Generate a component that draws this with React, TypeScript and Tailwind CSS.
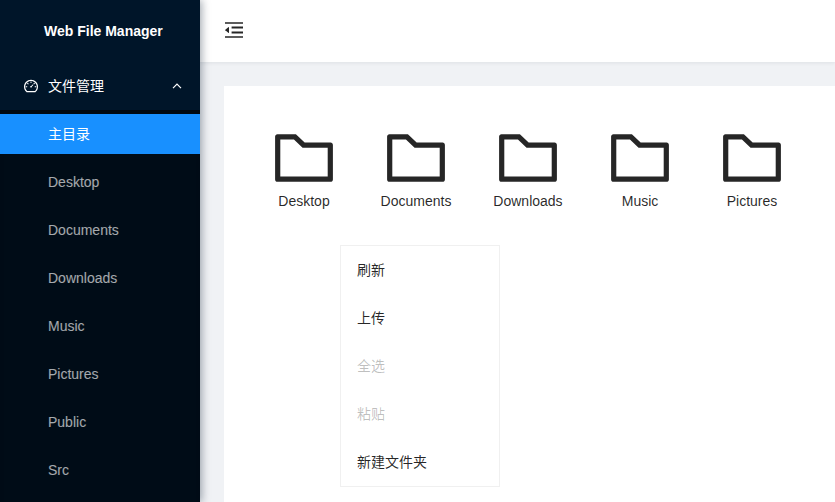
import { AiOutlineDashboard, AiOutlineFolder } from "react-icons/ai";

const places = ["Desktop", "Documents", "Downloads", "Music", "Pictures", "Public", "Src"];
const folders = ["Desktop", "Documents", "Downloads", "Music", "Pictures"];
const actions = [
  { label: "刷新", disabled: false },
  { label: "上传", disabled: false },
  { label: "全选", disabled: true },
  { label: "粘贴", disabled: true },
  { label: "新建文件夹", disabled: false },
];

function FoldIcon() {
  return (
    <svg className="h-4 w-[18px]" viewBox="0 0 18 16" fill="currentColor" aria-hidden="true">
      <path d="M0 .2h18v1.6H0zM0 14.2h18v1.6H0zM6.6 4.6H18v1.8H6.6zM6.6 9.6H18v1.8H6.6z" />
      <path d="M.3 7.7 3.6 5.1Q4 4.8 4 5.3v5.4q0 .5-.4.2L.3 8.3Q0 8 .3 7.7z" />
    </svg>
  );
}

function Sidebar() {
  return (
    <aside className="relative z-10 flex w-[200px] shrink-0 flex-col bg-[#001529] text-white shadow-[2px_0_8px_rgba(0,21,41,0.35)]">
      <h1 className="flex h-[62px] shrink-0 items-center pl-11 font-bold">Web File Manager</h1>
      <nav className="flex min-h-0 flex-1 flex-col pt-1">
        <button type="button" aria-expanded="true" className="flex h-10 shrink-0 items-center pr-[18px] pl-[23px]">
          <AiOutlineDashboard className="mr-[9px] size-4" />
          <span className="flex-1 text-left">文件管理</span>
          <svg className="size-2.5" viewBox="0 0 10 10" fill="none" stroke="currentColor" strokeWidth="1.2">
            <path d="M1 7.2 5 3.2 9 7.2" />
          </svg>
        </button>
        <ul className="mt-1 flex min-h-0 flex-1 flex-col gap-2 overflow-hidden bg-[#000c17] py-1 shadow-[inset_0_8px_8px_-6px_rgba(0,0,0,0.45)]">
          <li>
            <a href="#home" aria-current="page" className="block h-10 bg-[#1890ff] pl-12 leading-10">
              主目录
            </a>
          </li>
          {places.map((name) => (
            <li key={name}>
              <a href={`#${name}`} className="block h-10 pl-12 leading-10 text-white/65 hover:text-white">
                {name}
              </a>
            </li>
          ))}
        </ul>
      </nav>
    </aside>
  );
}

function ContextMenu() {
  return (
    <div
      role="menu"
      className="absolute top-[159px] left-[116px] flex w-40 flex-col gap-2 border border-[#f0f0f0] bg-white py-1"
    >
      {actions.map(({ label, disabled }) => (
        <button
          key={label}
          type="button"
          role="menuitem"
          disabled={disabled}
          className="h-10 px-4 text-left text-black/85 disabled:text-black/25"
        >
          {label}
        </button>
      ))}
    </div>
  );
}

export default function App() {
  return (
    <div className="flex h-screen overflow-hidden bg-[#f0f2f5] font-['Liberation_Sans','Noto_Sans_CJK_SC',sans-serif] text-sm leading-[22px] text-black/85">
      <Sidebar />
      <div className="flex min-w-0 flex-1 flex-col">
        <header className="flex h-[62px] shrink-0 items-center bg-white px-[25px] pb-0.5 shadow-[0_1px_4px_rgba(0,21,41,0.08)]">
          <button type="button" aria-label="Collapse sidebar">
            <FoldIcon />
          </button>
        </header>
        <main className="relative mt-6 ml-6 flex-1 bg-white px-6 pt-[35px]">
          <ul className="flex flex-wrap">
            {folders.map((name) => (
              <li key={name} className="w-28">
                <button type="button" className="flex w-full flex-col items-center">
                  <AiOutlineFolder className="size-[74px]" />
                  <span className="-mt-[5px]">{name}</span>
                </button>
              </li>
            ))}
          </ul>
          <ContextMenu />
        </main>
      </div>
    </div>
  );
}
